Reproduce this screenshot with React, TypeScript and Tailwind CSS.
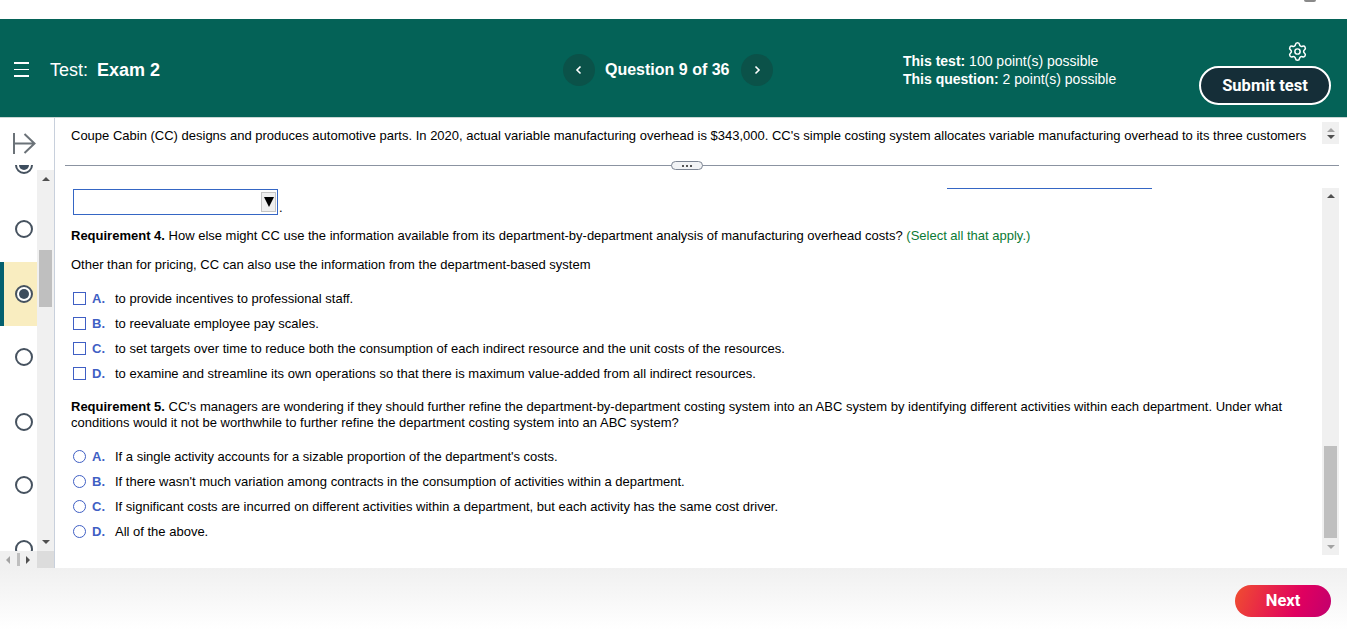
import React from 'react';
import { Settings } from 'lucide-react';

const checks = [
  { letter: 'A.', text: 'to provide incentives to professional staff.' },
  { letter: 'B.', text: 'to reevaluate employee pay scales.' },
  { letter: 'C.', text: 'to set targets over time to reduce both the consumption of each indirect resource and the unit costs of the resources.' },
  { letter: 'D.', text: 'to examine and streamline its own operations so that there is maximum value-added from all indirect resources.' },
];

const radios = [
  { letter: 'A.', text: "If a single activity accounts for a sizable proportion of the department's costs." },
  { letter: 'B.', text: "If there wasn't much variation among contracts in the consumption of activities within a department." },
  { letter: 'C.', text: 'If significant costs are incurred on different activities within a department, but each activity has the same cost driver.' },
  { letter: 'D.', text: 'All of the above.' },
];

const Arrow = ({ className }: { className: string }) => (
  <div className={`w-0 h-0 border-l-[4px] border-r-[4px] border-l-transparent border-r-transparent ${className}`} />
);

const Choice = ({ letter, text, round }: { letter: string; text: string; round?: boolean }) => (
  <div className="flex items-center h-[25px]">
    <div className={`w-[13px] h-[13px] border border-[#3f5fc4] ${round ? 'rounded-full' : ''}`} />
    <span className="w-[23px] ml-[6px] font-bold text-[#3f5fc4]">{letter}</span>
    <span>{text}</span>
  </div>
);

const NavRadio = ({ selected }: { selected?: boolean }) => (
  <div className="w-[18px] h-[18px] rounded-full border-2 border-[#46525f] flex items-center justify-center shrink-0 bg-white">
    {selected && <div className="w-[10px] h-[10px] rounded-full bg-[#3d4d5e]" />}
  </div>
);

const App = () => {
  return (
    <div className="w-[1347px] h-[630px] overflow-hidden flex flex-col bg-white text-[13px] leading-[14px] text-black font-['Liberation_Sans',Arial,sans-serif]">
      {/* top strip of the browser page */}
      <div className="h-[19px] shrink-0 bg-white flex justify-end pr-[31px]">
        <div className="w-[12px] h-[2px] rounded-b-full bg-[#8a8a8a]" />
      </div>

      {/* Header */}
      <header className="h-[99px] shrink-0 bg-[#046257] border-b border-[#c9d6d4] flex text-white">
        <div className="w-[563px] flex items-center pl-[14px] pt-[3px]">
          <div className="w-[15px] flex flex-col gap-[5px]">
            <div className="h-[1.5px] bg-white" />
            <div className="h-[1.5px] bg-white" />
            <div className="h-[1.5px] bg-white" />
          </div>
          <div className="ml-[21px] text-[18px] leading-[20px]">
            Test:<span className="font-bold ml-[9px]">Exam 2</span>
          </div>
        </div>
        <div className="w-[340px] flex items-center pt-[3px]">
          <div className="w-[32px] h-[32px] rounded-full bg-[#0b5249] flex items-center justify-center">
            <svg width="8" height="10" viewBox="0 0 8 10" fill="none" stroke="white" strokeWidth="1.6"><path d="M5.5 1.5 2 5l3.5 3.5" /></svg>
          </div>
          <div className="ml-[10px] text-[16px] leading-[20px] font-bold whitespace-nowrap">Question 9 of 36</div>
          <div className="ml-[12px] w-[32px] h-[32px] rounded-full bg-[#0b5249] flex items-center justify-center">
            <svg width="8" height="10" viewBox="0 0 8 10" fill="none" stroke="white" strokeWidth="1.6"><path d="M2.5 1.5 6 5 2.5 8.5" /></svg>
          </div>
        </div>
        <div className="w-[296px] pt-[33px] text-[14px] leading-[18px]">
          <div><span className="font-bold">This test:</span> 100 point(s) possible</div>
          <div><span className="font-bold">This question:</span> 2 point(s) possible</div>
        </div>
        <div className="w-[148px] flex flex-col items-end pt-[22px] pr-[16px]">
          <Settings className="w-[21px] h-[21px] mr-[23px]" strokeWidth={1.7} />
          <div className="mt-[4px] w-[132px] h-[39px] rounded-full bg-[#152e38] border-2 border-white flex items-center justify-center font-['Roboto',sans-serif] font-bold text-[16.5px]">
            Submit test
          </div>
        </div>
      </header>

      {/* Body */}
      <div className="h-[450px] shrink-0 flex">
        {/* Question navigator */}
        <aside className="w-[55px] shrink-0 border-r border-[#c8d0dc] flex flex-col relative">
          <div className="absolute left-[12px] top-[15px] text-[#6b7278]">
            <svg width="24" height="21" viewBox="0 0 24 21" fill="none" stroke="currentColor" strokeWidth="2"><path d="M2 0v21M2 10.5h21M12.5 1l10 9.5-10 9.5" /></svg>
          </div>
          <div className="h-[433px] flex overflow-hidden">
            <div className="w-[37px] flex flex-col items-start pt-[47px]">
              <div className="h-[9px] ml-[15px] w-[18px] overflow-hidden flex items-end shrink-0">
                <NavRadio selected />
              </div>
              <div className="mt-[46px] ml-[15px]"><NavRadio /></div>
              <div className="mt-[24px] h-[64px] w-[37px] shrink-0 bg-[#f9edc0] border-l-4 border-[#04606e] flex items-center pl-[11px]">
                <NavRadio selected />
              </div>
              <div className="mt-[22px] ml-[15px]"><NavRadio /></div>
              <div className="mt-[47px] ml-[15px]"><NavRadio /></div>
              <div className="mt-[45px] ml-[15px]"><NavRadio /></div>
              <div className="mt-[46px] ml-[15px]"><NavRadio /></div>
            </div>
            <div className="w-[17px] mt-[52px] bg-[#f0f0f0] relative flex justify-center">
              <Arrow className="absolute top-[7px] border-b-[4px] border-b-[#505050]" />
              <div className="absolute top-[80px] w-[13px] h-[57px] bg-[#bfbfbf]" />
              <Arrow className="absolute bottom-[7px] border-t-[4px] border-t-[#505050]" />
            </div>
          </div>
          <div className="h-[17px] flex bg-[#f0f0f0]">
            <div className="w-[37px] flex items-center pl-[6px]">
              <div className="w-0 h-0 border-y-[4px] border-r-[4px] border-y-transparent border-r-[#a3a3a3]" />
              <div className="w-[3px] h-[13px] bg-[#bfbfbf] ml-[7px]" />
              <div className="w-0 h-0 border-y-[4px] border-l-[4px] border-y-transparent border-l-[#505050] ml-[6px]" />
            </div>
            <div className="flex-1 bg-[#dcdcdc]" />
          </div>
        </aside>

        {/* Question content */}
        <main className="flex-1 flex flex-col min-w-0">
          <div className="h-[47px] shrink-0 flex pl-[16px] pr-[8px]">
            <div className="flex-1 pt-[11px] whitespace-nowrap overflow-hidden">
              Coupe Cabin (CC) designs and produces automotive parts. In 2020, actual variable manufacturing overhead is $343,000. CC's simple costing system allocates variable manufacturing overhead to its three customers
            </div>
            <div className="w-[17px] h-[22px] mt-[4px] bg-[#f0f0f0] flex flex-col items-center justify-center gap-[3px]">
              <Arrow className="border-b-[4px] border-b-[#a3a3a3]" />
              <Arrow className="border-t-[4px] border-t-[#505050]" />
            </div>
          </div>

          <div className="relative h-[1px] shrink-0 ml-[10px] mr-[8px] bg-[#8b93a1]">
            <div className="absolute left-[606px] -top-[4px] w-[32px] h-[9px] rounded-full bg-[#f2f3f5] border border-[#7d8593] flex items-center justify-center gap-[2px]">
              <div className="w-[2px] h-[2px] bg-[#555]" />
              <div className="w-[2px] h-[2px] bg-[#555]" />
              <div className="w-[2px] h-[2px] bg-[#555]" />
            </div>
          </div>

          <div className="flex-1 flex pl-[16px] pr-[8px] relative">
            <div className="absolute left-[892px] top-[22px] w-[205px] h-[1px] bg-[#3566c4]" />
            <div className="flex-1 min-w-0 pt-[23px] pr-[24px]">
              <div className="flex items-end ml-[2px] h-[26px]">
                <div className="w-[205px] h-[26px] border border-[#3566c4] flex justify-end items-center pr-[1px]">
                  <div className="w-[15px] h-[20px] bg-[#efefef] border border-[#c4c4c4] flex items-center justify-center">
                    <div className="w-0 h-0 border-x-[5px] border-t-[10px] border-x-transparent border-t-black" />
                  </div>
                </div>
                <span className="ml-[1px]">.</span>
              </div>

              <p className="mt-[14px]">
                <span className="font-bold">Requirement 4.</span> How else might CC use the information available from its department-by-department analysis of manufacturing overhead costs?{' '}
                <span className="text-[#0a7a35]">(Select all that apply.)</span>
              </p>
              <p className="mt-[15px]">Other than for pricing, CC can also use the information from the department-based system</p>

              <div className="mt-[14px] ml-[2px]">
                {checks.map((c) => (
                  <Choice key={c.letter} letter={c.letter} text={c.text} />
                ))}
              </div>

              <p className="mt-[13px] leading-[16px]">
                <span className="font-bold">Requirement 5.</span> CC's managers are wondering if they should further refine the department-by-department costing system into an ABC system by identifying different activities within each department. Under what conditions would it not be worthwhile to further refine the department costing system into an ABC system?
              </p>

              <div className="mt-[13px] ml-[2px]">
                {radios.map((r) => (
                  <Choice key={r.letter} letter={r.letter} text={r.text} round />
                ))}
              </div>
            </div>

            <div className="w-[17px] h-[367px] mt-[22px] bg-[#f0f0f0] relative flex justify-center">
              <Arrow className="absolute top-[6px] border-b-[4px] border-b-[#505050]" />
              <div className="absolute top-[258px] w-[13px] h-[92px] bg-[#bfbfbf]" />
              <Arrow className="absolute bottom-[6px] border-t-[4px] border-t-[#a3a3a3]" />
            </div>
          </div>
        </main>
      </div>

      {/* Footer */}
      <footer className="flex-1 bg-gradient-to-b from-[#f0f0f0] to-white flex justify-end pt-[17px] pr-[16px]">
        <div className="w-[96px] h-[32px] rounded-full bg-[linear-gradient(110deg,#f04e30,#e0005f_65%,#c1006e)] flex items-center justify-center text-white font-['Roboto',sans-serif] font-bold text-[16.5px]">
          Next
        </div>
      </footer>
    </div>
  );
};

export default App;
